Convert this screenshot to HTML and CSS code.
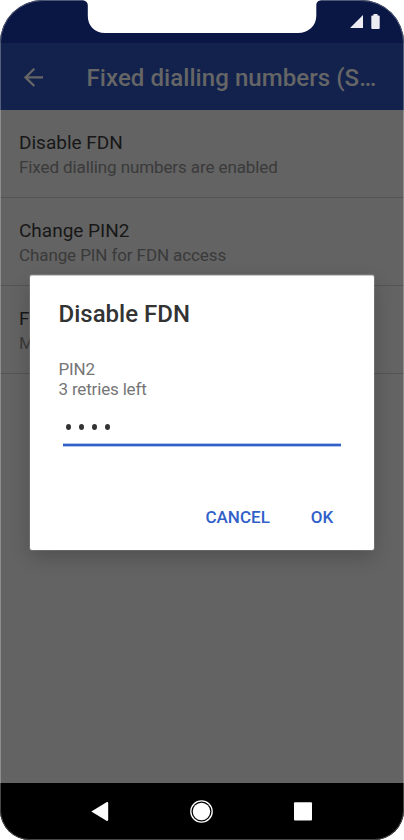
FILE: index.html
```html
<!DOCTYPE html>
<html lang="en">
<head>
<meta charset="utf-8">
<title>Fixed dialling numbers</title>
<link rel="stylesheet" href="styles.css">
</head>
<body>
<div class="phone">
  <div class="status">
    <svg class="notch" width="230" height="34" viewBox="0 0 230 34"><path d="M-4 0C-1.500 .5 .8 2.500 .8 5V16C.8 26 8 33 18 33H211C221 33 229.300 26 229.300 16V5C229.300 2.500 231 .5 234 0Z" fill="#fff"/></svg>
    <svg class="signal" width="32" height="16" viewBox="0 0 32 16"><path d="M0 14L13 1V14ZM21.300 2.500Q21.300 1.500 22.300 1.500H23.500V0H27.500V1.500H28.700Q29.700 1.500 29.700 2.500V14Q29.700 15 28.700 15H22.300Q21.300 15 21.300 14Z" fill="#ececf2"/></svg>
  </div>
  <header class="bar">
    <svg class="back" width="20" height="20" viewBox="0 0 20 20"><path d="M20 9.400H2.500M11.300 .8L2.500 9.400L11.300 18" fill="none" stroke="#666" stroke-width="2.300"/></svg>
    <h1>Fixed dialling numbers (S…</h1>
  </header>
  <main class="list">
    <div class="item"><div class="name">Disable FDN</div><div class="note">Fixed dialling numbers are enabled</div></div>
    <div class="item"><div class="name">Change PIN2</div><div class="note">Change PIN for FDN access</div></div>
    <div class="item"><div class="name">F</div><div class="note">M</div></div>
  </main>
  <nav class="nav">
    <svg width="404" height="57" viewBox="0 0 404 57"><path d="M91.300 28.500L106.500 19.300Q108.200 18.500 108.200 20.200V36.800Q108.200 38.500 106.500 37.700Z" fill="#fff"/><circle cx="201.500" cy="28.500" r="10.700" fill="none" stroke="#fff" stroke-width="1.300"/><circle cx="201.500" cy="28.500" r="8.700" fill="#fff"/><rect x="294" y="19.300" width="18" height="18.300" rx="1" fill="#fff"/></svg>
  </nav>
  <section class="dialog">
    <h2>Disable FDN</h2>
    <p class="hint">PIN2<br>3 retries left</p>
    <div class="field"><i></i><i></i><i></i><i></i></div>
    <div class="actions"><span class="cancel">CANCEL</span><span class="ok">OK</span></div>
  </section>
</div>
</body>
</html>
```
FILE: styles.css
```css
* { box-sizing: border-box; }
body { margin: 0; background: #fff; font-family: Roboto, sans-serif; }
.phone {
  position: relative;
  width: 404px;
  height: 840px;
  display: flex;
  flex-direction: column;
  overflow: hidden;
  border-radius: 43px 43px 30px 30px;
  background: #636363;
}
.phone::after {
  content: "";
  position: absolute;
  inset: 0;
  border: 1px solid rgba(255, 255, 255, .28);
  border-radius: inherit;
}
.status { position: relative; height: 43px; background: #0a1744; }
.notch { position: absolute; left: 87px; top: 0; z-index: 2; overflow: visible; }
.signal { position: absolute; left: 350px; top: 14px; }
.bar { height: 67px; background: #12224d; display: flex; align-items: center; padding: 2px 0 0 23px; }
.back { flex: none; }
h1 { margin: 0 0 0 43.500px; font-size: 24px; font-weight: 500; line-height: 28px; letter-spacing: .07px; color: #666; white-space: nowrap; }
.list { flex: 1; }
.item { height: 88px; padding: 21px 19px 0; border-bottom: 1px solid #545454; white-space: nowrap; }
.name { font-size: 19px; line-height: 24px; color: #171717; }
.note { font-size: 17px; line-height: 24px; letter-spacing: -.1px; color: #3a3a3a; }
.nav { height: 57px; background: #000; }
.nav svg { display: block; }
.dialog {
  position: absolute;
  left: 30px;
  top: 275px;
  width: 344px;
  height: 275px;
  padding: 24px 28.500px 0;
  background: #fff;
  border-top: 1px solid #c8c8c8;
  border-radius: 2px;
  box-shadow: 0 7px 20px rgba(0, 0, 0, .2), 0 0 0 1px rgba(255, 255, 255, .15);
}
h2 { margin: -1px 0 0; font-size: 24px; font-weight: 500; line-height: 30px; color: #333; }
.hint { margin: 31px 0 0; font-size: 17px; line-height: 19.500px; letter-spacing: -.17px; color: #767676; }
/* The underline is a solid 2px rule with a faint edge above and below. */
.field {
  display: flex;
  gap: 7.800px;
  width: 278px;
  height: 47px;
  margin-left: 4.500px;
  padding: 25px 0 0 3px;
  border-bottom: 2px solid #3060c8;
  box-shadow: inset 0 -1px #b3c5ed, 0 1px #b3c5ed;
}
.field i { width: 5.200px; height: 6px; border-radius: 50%; background: #333; }
.actions { display: flex; margin-top: 61px; padding-left: 147px; font-size: 17px; font-weight: 500; line-height: 20px; color: #3060c8; }
.ok { margin-left: 41px; }
```
